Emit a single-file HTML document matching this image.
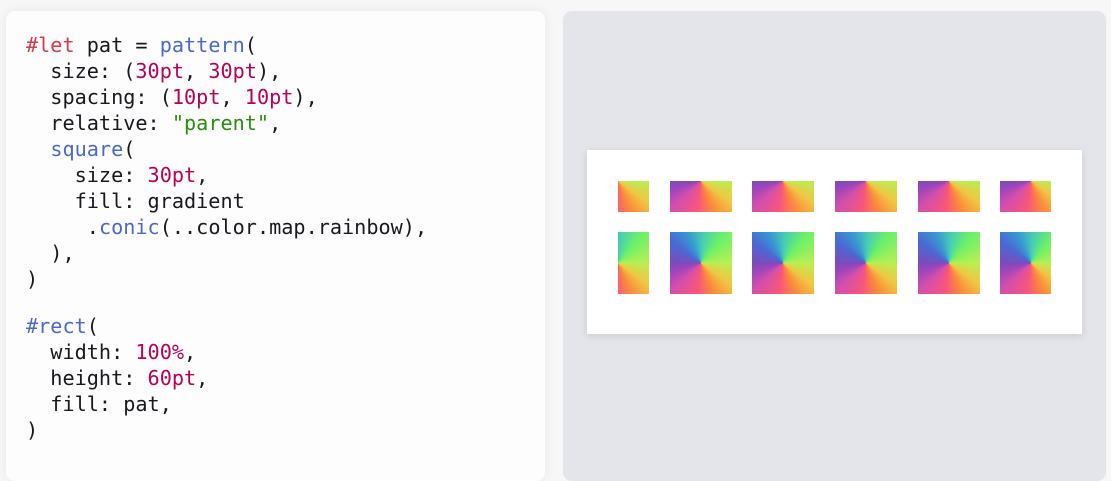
<!DOCTYPE html>
<html><head><style>
body{margin:0;width:1111px;height:475px;background:#f7f7f8;position:relative;overflow:hidden}
.card{position:absolute;left:6px;top:11px;width:539px;height:470px;background:#fdfdfd;border-radius:9px;box-shadow:0 0 12px rgba(0,0,0,.07)}
pre{position:absolute;left:20px;top:21px;margin:0;font-family:"DejaVu Sans Mono","Liberation Mono",monospace;font-size:20.2px;line-height:26px;color:#19181f}
.b{display:block;height:21px}
.k{color:#d73948}.f{color:#4b69c6}.n{color:#b60157}.s{color:#298e0d}
.panel{position:absolute;left:563px;top:11px;width:543px;height:470px;background:#e4e5ea;border-radius:9px}
.page{position:absolute;left:587px;top:150px;width:495px;height:184px;background:#fff;box-shadow:0 2px 8px rgba(0,0,0,.12)}
.clip{position:absolute;left:618px;top:181px;width:433px;height:113px;overflow:hidden}
.t{position:absolute;width:62px;height:62px;background:conic-gradient(from 90deg,#b8ef52 0%,#f0c744 10%,#fb8d3a 18%,#f9567a 27%,#d44fab 38%,#a045bb 45%,#7c4bbb 50%,#4b68d3 60%,#3898d1 68%,#47cdb4 76%,#6cf168 86%,#b8ef52 100%)}
</style></head><body>
<div class="card"><pre><span class="k">#let</span> pat = <span class="f">pattern</span>(
  size: (<span class="n">30pt</span>, <span class="n">30pt</span>),
  spacing: (<span class="n">10pt</span>, <span class="n">10pt</span>),
  relative: <span class="s">"parent"</span>,
  <span class="f">square</span>(
    size: <span class="n">30pt</span>,
    fill: gradient
     .<span class="f">conic</span>(..color.map.rainbow),
  ),
)<span class="b"></span><span class="f">#rect</span>(
  width: <span class="n">100%</span>,
  height: <span class="n">60pt</span>,
  fill: pat,
)</pre></div>
<div class="panel"></div>
<div class="page"></div>
<div class="clip">
<div class="t" style="left:-31px;top:-31px"></div><div class="t" style="left:52px;top:-31px"></div><div class="t" style="left:134px;top:-31px"></div><div class="t" style="left:217px;top:-31px"></div><div class="t" style="left:300px;top:-31px"></div><div class="t" style="left:382px;top:-31px"></div>
<div class="t" style="left:-31px;top:51px"></div><div class="t" style="left:52px;top:51px"></div><div class="t" style="left:134px;top:51px"></div><div class="t" style="left:217px;top:51px"></div><div class="t" style="left:300px;top:51px"></div><div class="t" style="left:382px;top:51px"></div>
</div>
</body></html>
